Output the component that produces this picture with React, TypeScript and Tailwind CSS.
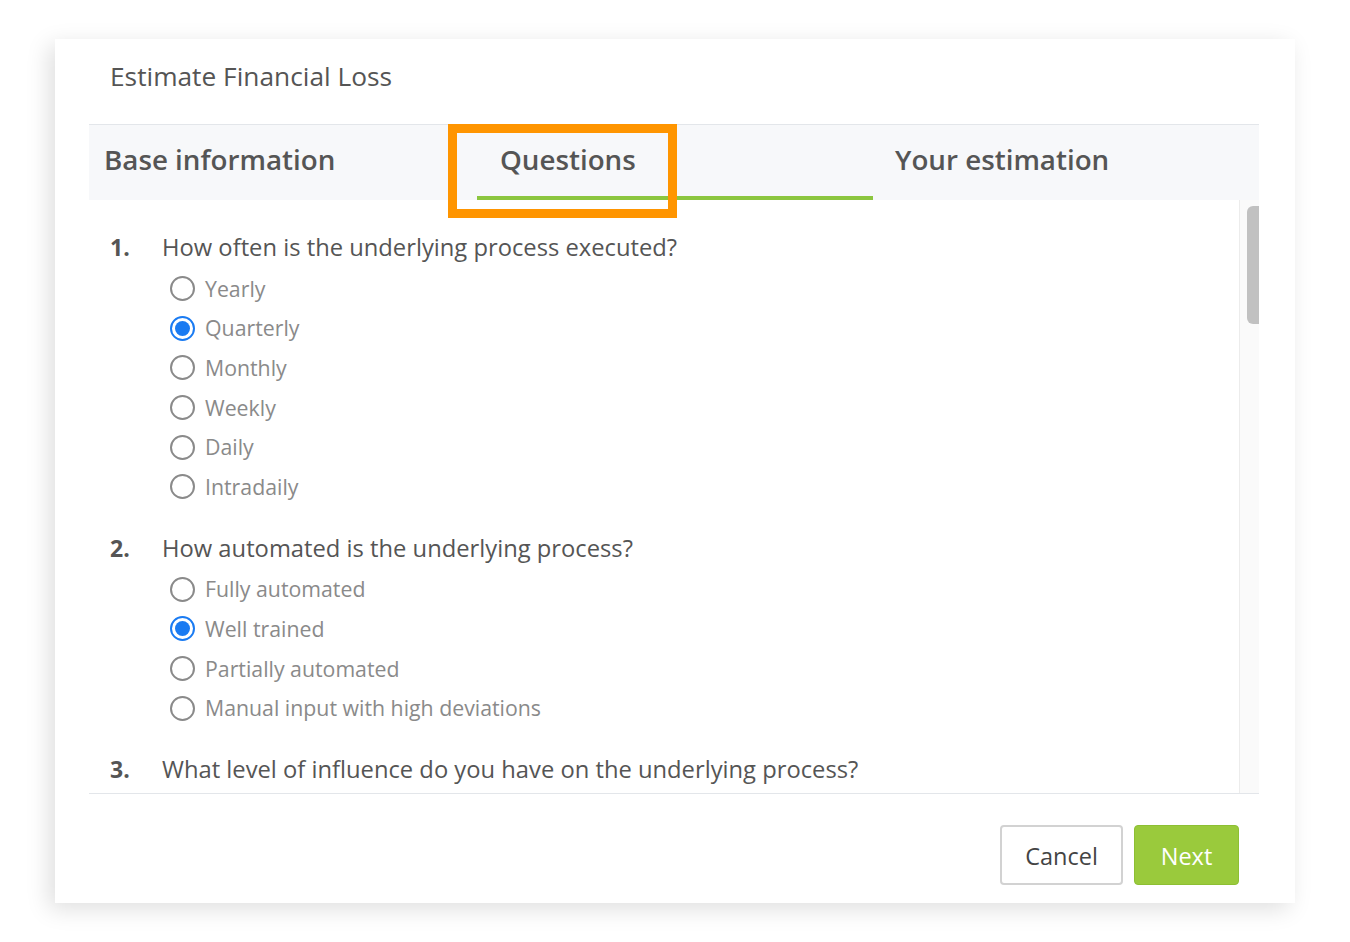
import React from 'react';

interface Question {
  number: string;
  text: string;
  options: string[];
  selected?: number;
}

const questions: Question[] = [
  {
    number: '1.',
    text: 'How often is the underlying process executed?',
    options: ['Yearly', 'Quarterly', 'Monthly', 'Weekly', 'Daily', 'Intradaily'],
    selected: 1,
  },
  {
    number: '2.',
    text: 'How automated is the underlying process?',
    options: ['Fully automated', 'Well trained', 'Partially automated', 'Manual input with high deviations'],
    selected: 1,
  },
  {
    number: '3.',
    text: 'What level of influence do you have on the underlying process?',
    options: [],
  },
];

const Radio: React.FC<{ checked: boolean }> = ({ checked }) =>
  checked ? (
    <span className="flex h-[25px] w-[25px] shrink-0 items-center justify-center rounded-full border-2 border-[#1a7bf2] bg-white">
      <span className="h-[15px] w-[15px] rounded-full bg-[#1a7bf2]" />
    </span>
  ) : (
    <span className="h-[25px] w-[25px] shrink-0 rounded-full border-2 border-[#8a8a8a] bg-white" />
  );

const QuestionBlock: React.FC<{ q: Question }> = ({ q }) => (
  <div className="flex flex-col">
    <div className="flex h-[30px] items-baseline text-[23.75px] leading-[30px] text-[#555]">
      <span className="w-[52px] text-[23px] font-bold">{q.number}</span>
      <span>{q.text}</span>
    </div>
    {q.options.length > 0 && (
      <div className="mt-[7px] flex flex-col pl-[60px]">
        {q.options.map((o, i) => (
          <label key={o} className="flex h-[39.6px] items-center gap-[10px] text-[21.3px] text-[#8a8a8a]">
            <Radio checked={q.selected === i} />
            <span>{o}</span>
          </label>
        ))}
      </div>
    )}
  </div>
);

export default function App() {
  return (
    <div className="min-h-screen bg-white pl-[55px] pt-[39px]" style={{ fontFamily: '"Open Sans", "Liberation Sans", sans-serif' }}>
      <div className="flex h-[864px] w-[1240px] flex-col bg-white shadow-[-6px_6px_22px_rgba(0,0,0,0.13)]">
        {/* Header */}
        <div className="flex h-[85px] items-start pl-[55px] pt-[18px] text-[26.3px] text-[#555]">
          Estimate Financial Loss
        </div>

        <div className="ml-[34px] mr-[36px] flex min-h-0 flex-1 flex-col">
          {/* Tabs */}
          <div className="relative flex h-[76px] border-t border-[#e3e6ea] bg-[#f7f8fa] text-[27.75px] font-semibold text-[#555]">
            <div className="flex w-[388px] items-center pl-[15px] pb-[6px]">Base information</div>
            <div className="flex w-[396px] items-center border-b-4 border-[#8cc63f] pl-[23px] pb-[2px]">Questions</div>
            <div className="flex flex-1 items-center pl-[22px] pb-[6px]">Your estimation</div>
            <div className="pointer-events-none absolute left-[359px] top-[-1px] h-[94px] w-[229px] border-[9px] border-[#ff9500]" />
          </div>

          {/* Scrollable content */}
          <div className="flex h-[594px] overflow-hidden border-b border-[#e3e6ea]">
            <div className="flex flex-1 flex-col gap-[26px] overflow-hidden pl-[21px] pt-[32px]">
              {questions.map((q) => (
                <QuestionBlock key={q.number} q={q} />
              ))}
            </div>
            <div className="w-[20px] border-l border-[#ececec] bg-[#fafafa] pl-[7px] pt-[6px]">
              <div className="h-[118px] w-[13px] rounded-l-[6px] bg-[#c1c1c1]" />
            </div>
          </div>

          {/* Footer */}
          <div className="flex justify-end gap-[11px] pr-[20px] pt-[31px]">
            <button className="h-[60px] w-[123px] rounded-[4px] border-2 border-[#d2d2d2] bg-white pt-[3px] text-[23.5px] text-[#444]">
              Cancel
            </button>
            <button className="h-[60px] w-[105px] rounded-[4px] border border-[#8dbf33] bg-[#9aca3c] pt-[3px] text-[23.5px] text-white">
              Next
            </button>
          </div>
        </div>
      </div>
    </div>
  );
}
